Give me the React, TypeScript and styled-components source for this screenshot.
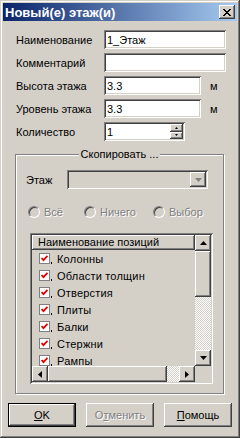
import React from "react";
import styled, { createGlobalStyle, css } from "styled-components";

const face = "#d4d0c8";
const shade = "#808080";
const dark = "#404040";
const light = "#ffffff";
const uiFont = `"Liberation Sans", Arial, sans-serif`;

const GlobalStyle = createGlobalStyle`
  html, body {
    margin: 0;
    padding: 0;
    background: ${face};
  }
  body {
    font-family: ${uiFont};
    font-size: 11px;
    color: #000;
  }
`;

const raised = css`
  box-shadow: inset -1px -1px ${dark}, inset 1px 1px ${light},
    inset -2px -2px ${shade}, inset 2px 2px ${face};
`;

const sunken = css`
  box-shadow: inset 1px 1px ${shade}, inset -1px -1px ${light},
    inset 2px 2px ${dark}, inset -2px -2px ${face};
`;

const hatched = css`
  background: repeating-conic-gradient(${light} 0 25%, ${face} 0 50%) 0 0 / 2px 2px;
`;

const Window = styled.div`
  box-sizing: border-box;
  width: 240px;
  height: 438px;
  padding: 3px;
  background: ${face};
  box-shadow: inset -1px -1px ${dark}, inset 1px 1px ${face},
    inset -2px -2px ${shade}, inset 2px 2px ${light};
  display: flex;
  flex-direction: column;
`;

const Caption = styled.div`
  height: 18px;
  display: flex;
  align-items: center;
  justify-content: space-between;
  padding: 0 2px;
  background: linear-gradient(to right, #0a246a, #a6caf0);
  color: #fff;
  font-weight: bold;
  font-size: 13px;
`;

const CloseButton = styled.div`
  box-sizing: border-box;
  width: 16px;
  height: 14px;
  background: ${face};
  ${raised};
  display: flex;
  align-items: center;
  justify-content: center;
`;

const Form = styled.div`
  margin-top: 9px;
  padding-left: 13px;
  display: flex;
  flex-direction: column;
  gap: 4px;
`;

const Row = styled.div`
  display: flex;
  align-items: center;
  height: 19px;
`;

const Label = styled.span<{ $w?: number }>`
  width: ${(p) => p.$w ?? 88}px;
  flex-shrink: 0;
`;

const Field = styled.input<{ $w: number }>`
  box-sizing: border-box;
  width: ${(p) => p.$w}px;
  height: 19px;
  margin: 0;
  padding: 0 2px 0 3px;
  border: none;
  outline: none;
  font: 11px ${uiFont};
  color: #000;
  background: #fff;
  ${sunken};
`;

const Unit = styled.span`
  margin-left: 9px;
`;

const SpinBox = styled.div`
  box-sizing: border-box;
  width: 81px;
  height: 19px;
  padding: 2px;
  display: flex;
  background: #fff;
  ${sunken};
`;

const SpinInput = styled.input`
  flex: 1;
  min-width: 0;
  margin: 0;
  padding: 0 0 0 1px;
  border: none;
  outline: none;
  font: 11px ${uiFont};
  background: #fff;
`;

const SpinButtons = styled.div`
  width: 13px;
  display: flex;
  flex-direction: column;
`;

const SpinButton = styled.div`
  flex: 1;
  background: ${face};
  ${raised};
  display: flex;
  align-items: center;
  justify-content: center;
`;

const Group = styled.div`
  position: relative;
  box-sizing: border-box;
  margin: 13px 0 0 12px;
  width: 209px;
  height: 240px;
  padding: 15px 0 0 10px;
  border: 1px solid ${shade};
  box-shadow: inset 1px 1px ${light}, 1px 1px ${light};
  display: flex;
  flex-direction: column;
`;

const Legend = styled.span`
  position: absolute;
  top: -8px;
  left: 50%;
  transform: translateX(-50%);
  padding: 0 2px;
  line-height: 14px;
  background: ${face};
  white-space: nowrap;
`;

const Combo = styled.div`
  box-sizing: border-box;
  width: 141px;
  height: 19px;
  padding: 2px;
  display: flex;
  justify-content: flex-end;
  background: ${face};
  ${sunken};
`;

const ComboButton = styled.div`
  width: 16px;
  background: ${face};
  ${raised};
  display: flex;
  align-items: center;
  justify-content: center;
`;

const Radios = styled.div`
  margin: 16px 0 0 2px;
  height: 13px;
  display: flex;
  align-items: center;
`;

const RadioItem = styled.div<{ $w?: number }>`
  width: ${(p) => (p.$w ? `${p.$w}px` : "auto")};
  display: flex;
  align-items: center;
  gap: 4px;
`;

const RadioDot = styled.span`
  box-sizing: border-box;
  width: 12px;
  height: 12px;
  border-radius: 50%;
  border: 1px solid;
  border-color: ${shade} ${light} ${light} ${shade};
  background: ${face};
  box-shadow: inset 1px 1px ${dark}, inset -1px -1px ${face};
`;

const Disabled = styled.span`
  color: ${shade};
  text-shadow: 1px 1px ${light};
`;

const ListBox = styled.div`
  box-sizing: border-box;
  margin: 15px 0 0 4px;
  width: 183px;
  height: 151px;
  padding: 2px;
  background: ${face};
  ${sunken};
  display: grid;
  grid-template-columns: 163px 16px;
  grid-template-rows: 131px 16px;
`;

const ListContent = styled.div`
  overflow: hidden;
  display: flex;
  flex-direction: column;
`;

const ListHeader = styled.div`
  box-sizing: border-box;
  height: 15px;
  flex-shrink: 0;
  padding-left: 6px;
  line-height: 14px;
  background: ${face};
  box-shadow: inset -1px -1px ${dark}, inset 1px 1px ${light}, inset -2px -2px ${shade};
`;

const ListItem = styled.div`
  height: 17px;
  flex-shrink: 0;
  padding-left: 7px;
  display: flex;
  align-items: center;
  gap: 7px;
  letter-spacing: 0.2px;
`;

const CheckBox = styled.span`
  position: relative;
  box-sizing: border-box;
  width: 11px;
  height: 11px;
  border: 1px solid ${shade};
  background: #fff;
  display: flex;
  align-items: center;
  justify-content: center;

  &::after {
    content: "";
    position: absolute;
    right: -3px;
    bottom: -1px;
    width: 1px;
    height: 2px;
    background: #000;
  }
`;

const VScroll = styled.div`
  display: flex;
  flex-direction: column;
`;

const HScroll = styled.div`
  display: flex;
`;

const ArrowButton = styled.div`
  width: 16px;
  height: 16px;
  flex-shrink: 0;
  background: ${face};
  ${raised};
  display: flex;
  align-items: center;
  justify-content: center;
`;

const Thumb = styled.div<{ $len: number; $vertical?: boolean }>`
  flex-shrink: 0;
  ${(p) => (p.$vertical ? `height: ${p.$len}px;` : `width: ${p.$len}px;`)}
  background: ${face};
  ${raised};
`;

const Track = styled.div`
  flex: 1;
  ${hatched};
`;

const Corner = styled.div`
  background: ${face};
`;

const ButtonRow = styled.div`
  margin: 9px 0 0 5px;
  display: flex;
  gap: 10px;
`;

const PushButton = styled.div<{ $default?: boolean }>`
  box-sizing: border-box;
  width: 68px;
  height: 24px;
  display: flex;
  align-items: center;
  justify-content: center;
  background: ${face};
  ${(p) =>
    p.$default
      ? css`
          box-shadow: inset 0 0 0 1px #000, inset -2px -2px ${dark},
            inset 2px 2px ${light}, inset -3px -3px ${shade};
        `
      : raised};
`;

const Arrow = ({ dir, color = "#000" }: { dir: "up" | "down" | "left" | "right"; color?: string }) => {
  const pts = {
    up: "3.5,0 7,4 0,4",
    down: "0,0 7,0 3.5,4",
    left: "4,0 4,7 0,3.5",
    right: "0,0 0,7 4,3.5",
  }[dir];
  const vertical = dir === "up" || dir === "down";
  return (
    <svg width={vertical ? 7 : 4} height={vertical ? 4 : 7} viewBox={vertical ? "0 0 7 4" : "0 0 4 7"}>
      <polygon points={pts} fill={color} />
    </svg>
  );
};

const items = ["Колонны", "Области толщин", "Отверстия", "Плиты", "Балки", "Стержни", "Рампы"];

export default function App() {
  return (
    <>
      <GlobalStyle />
      <Window>
        <Caption>
          <span>Новый(е) этаж(и)</span>
          <CloseButton>
            <svg width="8" height="7" viewBox="0 0 8 7" shapeRendering="crispEdges">
              <path d="M0 0h2v1h1v1h2v-1h1v-1h2v1h-1v1h-1v1h-1v1h1v1h1v1h1v1h-2v-1h-1v-1h-2v1h-1v1h-2v-1h1v-1h1v-1h1v-1h-1v-1h-1v-1h-1z" fill="#000" />
            </svg>
          </CloseButton>
        </Caption>

        <Form>
          <Row>
            <Label>Наименование</Label>
            <Field $w={122} defaultValue="1_Этаж" readOnly />
          </Row>
          <Row>
            <Label>Комментарий</Label>
            <Field $w={122} defaultValue="" readOnly />
          </Row>
          <Row>
            <Label>Высота этажа</Label>
            <Field $w={97} defaultValue="3.3" readOnly />
            <Unit>м</Unit>
          </Row>
          <Row>
            <Label>Уровень этажа</Label>
            <Field $w={97} defaultValue="3.3" readOnly />
            <Unit>м</Unit>
          </Row>
          <Row>
            <Label>Количество</Label>
            <SpinBox>
              <SpinInput defaultValue="1" readOnly />
              <SpinButtons>
                <SpinButton>
                  <svg width="3" height="2" viewBox="0 0 3 2"><polygon points="1.5,0 3,2 0,2" fill="#000" /></svg>
                </SpinButton>
                <SpinButton>
                  <svg width="3" height="2" viewBox="0 0 3 2"><polygon points="0,0 3,0 1.5,2" fill="#000" /></svg>
                </SpinButton>
              </SpinButtons>
            </SpinBox>
          </Row>
        </Form>

        <Group>
          <Legend>Скопировать ...</Legend>
          <Row>
            <Label $w={41}>Этаж</Label>
            <Combo>
              <ComboButton>
                <Arrow dir="down" color={shade} />
              </ComboButton>
            </Combo>
          </Row>

          <Radios>
            <RadioItem $w={56}>
              <RadioDot />
              <Disabled>Всё</Disabled>
            </RadioItem>
            <RadioItem $w={69}>
              <RadioDot />
              <Disabled>Ничего</Disabled>
            </RadioItem>
            <RadioItem>
              <RadioDot />
              <Disabled>Выбор</Disabled>
            </RadioItem>
          </Radios>

          <ListBox>
            <ListContent>
              <ListHeader>Наименование позиций</ListHeader>
              {items.map((name) => (
                <ListItem key={name}>
                  <CheckBox>
                    <svg width="7" height="7" viewBox="0 0 7 7">
                      <path d="M0.5 3 L2.5 5.2 L6.5 0.8" fill="none" stroke="#e00000" strokeWidth="1.8" />
                    </svg>
                  </CheckBox>
                  <span>{name}</span>
                </ListItem>
              ))}
            </ListContent>
            <VScroll>
              <ArrowButton>
                <Arrow dir="up" />
              </ArrowButton>
              <Thumb $vertical $len={46} />
              <Track />
              <ArrowButton>
                <Arrow dir="down" />
              </ArrowButton>
            </VScroll>
            <HScroll>
              <ArrowButton>
                <Arrow dir="left" />
              </ArrowButton>
              <Thumb $len={119} />
              <Track />
              <ArrowButton>
                <Arrow dir="right" />
              </ArrowButton>
            </HScroll>
            <Corner />
          </ListBox>
        </Group>

        <ButtonRow>
          <PushButton $default>
            <span>
              <u>O</u>K
            </span>
          </PushButton>
          <PushButton>
            <Disabled>
              О<u>т</u>менить
            </Disabled>
          </PushButton>
          <PushButton>
            <span>
              <u>П</u>омощь
            </span>
          </PushButton>
        </ButtonRow>
      </Window>
    </>
  );
}
